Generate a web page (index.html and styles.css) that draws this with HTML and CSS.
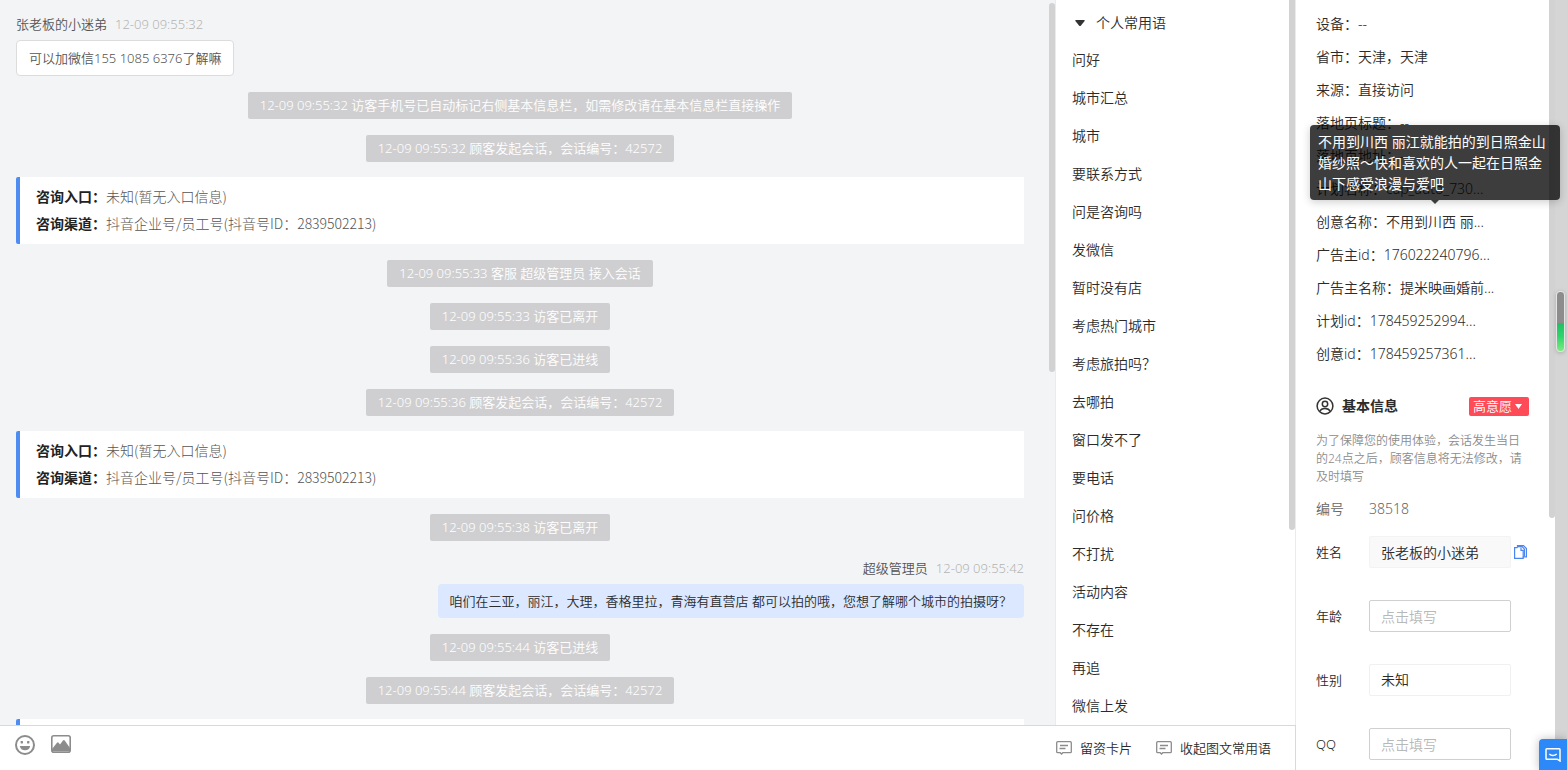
FILE: index.html
```html
<!DOCTYPE html>
<html lang="zh-CN">
<head>
<meta charset="utf-8">
<title>会话</title>
<link rel="stylesheet" href="styles.css">
</head>
<body>
<div class="app">
  <div class="workspace">
    <div class="panels">
      <main class="chat">
        <div class="messages">
          <div class="msg-head"><span class="msg-name">张老板的小迷弟</span><time class="msg-time">12-09 09:55:32</time></div>
          <div class="bubble bubble-in">可以加微信155 1085 6376了解嘛</div>
          <p class="notice">12-09 09:55:32 访客手机号已自动标记右侧基本信息栏，如需修改请在基本信息栏直接操作</p>
          <p class="notice">12-09 09:55:32 顾客发起会话，会话编号：42572</p>
          <div class="entry">
            <div class="entry-row"><b>咨询入口：</b>未知(暂无入口信息)</div>
            <div class="entry-row"><b>咨询渠道：</b>抖音企业号/员工号(抖音号ID：2839502213)</div>
          </div>
          <p class="notice">12-09 09:55:33 客服 超级管理员 接入会话</p>
          <p class="notice">12-09 09:55:33 访客已离开</p>
          <p class="notice">12-09 09:55:36 访客已进线</p>
          <p class="notice">12-09 09:55:36 顾客发起会话，会话编号：42572</p>
          <div class="entry">
            <div class="entry-row"><b>咨询入口：</b>未知(暂无入口信息)</div>
            <div class="entry-row"><b>咨询渠道：</b>抖音企业号/员工号(抖音号ID：2839502213)</div>
          </div>
          <p class="notice">12-09 09:55:38 访客已离开</p>
          <div class="msg-head msg-head-out"><span class="msg-name">超级管理员</span><time class="msg-time">12-09 09:55:42</time></div>
          <div class="bubble bubble-out">咱们在三亚，丽江，大理，香格里拉，青海有直营店 都可以拍的哦，您想了解哪个城市的拍摄呀？</div>
          <p class="notice">12-09 09:55:44 访客已进线</p>
          <p class="notice">12-09 09:55:44 顾客发起会话，会话编号：42572</p>
          <div class="entry entry-cut"></div>
        </div>
        <span class="thumb thumb-chat"></span>
      </main>
      <aside class="phrases">
        <button class="phrase-title" type="button">
          <svg width="10" height="6" viewBox="0 0 10 6"><path d="M1 0h8q1.300 0 .6 1L6 5.500q-1 1-2 0L.4 1Q-.3 0 1 0z" fill="#333"/></svg>个人常用语
        </button>
        <ul class="phrase-list">
          <li>问好</li><li>城市汇总</li><li>城市</li><li>要联系方式</li><li>问是咨询吗</li><li>发微信</li>
          <li>暂时没有店</li><li>考虑热门城市</li><li>考虑旅拍吗？</li><li>去哪拍</li><li>窗口发不了</li><li>要电话</li>
          <li>问价格</li><li>不打扰</li><li>活动内容</li><li>不存在</li><li>再追</li><li>微信上发</li>
        </ul>
        <span class="thumb thumb-phrases"></span>
      </aside>
    </div>
    <footer class="toolbar">
      <button class="tool" type="button" aria-label="表情">
        <svg width="20" height="20" viewBox="0 0 20 20"><circle cx="10" cy="10" r="9" fill="none" stroke="#8c8c8c" stroke-width="2"/><rect x="5.600" y="6" width="2.400" height="2.400" rx=".6" fill="#8c8c8c"/><rect x="12" y="6" width="2.400" height="2.400" rx=".6" fill="#8c8c8c"/><path d="M4.800 11h10.400c-.3 2.800-2.500 4.300-5.200 4.300S5.100 13.800 4.800 11z" fill="#8c8c8c"/></svg>
      </button>
      <button class="tool" type="button" aria-label="图片">
        <svg width="20" height="18" viewBox="0 0 20 18"><rect x=".8" y=".8" width="18.400" height="16.400" rx="2" fill="none" stroke="#8c8c8c" stroke-width="1.600"/><path d="M1 14l5-6.300q.8-1 1.600 0L9 9.500l3-4q.9-1 1.700 0L19 13v3.500H1z" fill="#8c8c8c"/></svg>
      </button>
      <div class="links">
        <button class="link" type="button">
          <svg width="16" height="14" viewBox="0 0 16 14"><path d="M1.700.7h12.600q1 0 1 1v9q0 1-1 1H6.800L5.500 13l-1.300-1.300H1.700q-1 0-1-1v-9q0-1 1-1zM4 4.500h8M3.500 7.500h6" fill="none" stroke="#8c8c8c" stroke-width="1.300"/></svg>留资卡片
        </button>
        <button class="link" type="button">
          <svg width="16" height="14" viewBox="0 0 16 14"><path d="M1.700.7h12.600q1 0 1 1v9q0 1-1 1H6.800L5.500 13l-1.300-1.300H1.700q-1 0-1-1v-9q0-1 1-1zM4 4.500h8M3.500 7.500h6" fill="none" stroke="#8c8c8c" stroke-width="1.300"/></svg>收起图文常用语
        </button>
      </div>
    </footer>
  </div>
  <aside class="visitor">
    <div class="visitor-body">
      <ul class="facts">
        <li>设备：--</li>
        <li>省市：天津，天津</li>
        <li>来源：直接访问</li>
        <li>落地页标题：--</li>
        <li>落地页地址：--</li>
        <li>计划名称：cap_auto_730...</li>
        <li class="has-tip">创意名称：不用到川西 丽...<span class="tip" role="tooltip">不用到川西 丽江就能拍的到日照金山婚纱照～快和喜欢的人一起在日照金山下感受浪漫与爱吧</span></li>
        <li>广告主id：176022240796...</li>
        <li>广告主名称：提米映画婚前...</li>
        <li>计划id：178459252994...</li>
        <li>创意id：178459257361...</li>
      </ul>
      <div class="section-head">
        <svg width="18" height="18" viewBox="0 0 18 18" fill="none" stroke="#333" stroke-width="1.500"><circle cx="9" cy="9" r="7.900"/><circle cx="9" cy="7" r="2.700"/><path d="M3.700 14.500c1-2.300 3-3 5.300-3s4.300.7 5.300 3"/></svg>
        <h2>基本信息</h2>
        <button class="tag" type="button">高意愿<svg width="7" height="5" viewBox="0 0 7 5"><path d="M0 0h7L3.500 5z" fill="#fff"/></svg></button>
      </div>
      <p class="hint">为了保障您的使用体验，会话发生当日的24点之后，顾客信息将无法修改，请及时填写</p>
      <div class="number"><span>编号</span><span>38518</span></div>
      <form class="fields">
        <div class="field"><label for="name">姓名</label><input class="readonly" id="name" type="text" value="张老板的小迷弟" readonly>
          <button class="copy" type="button" aria-label="复制"><svg width="13" height="14" viewBox="0 0 13 14" fill="none" stroke="#4d85f0" stroke-width="1.200"><path d="M3.500 2.600H.6v10.800h8.600v-1.600"/><path d="M3.500 1.600h4.700l2.200 2.600v7.400"/><path d="M3.500 2.600V.6h6l2.900 3v8.200H9.200V5.400H7V2.600"/></svg></button></div>
        <div class="field"><label for="age">年龄</label><input id="age" type="text" placeholder="点击填写"></div>
        <div class="field"><label for="gender">性别</label><select id="gender"><option>未知</option><option>男</option><option>女</option></select></div>
        <div class="field"><label for="qq">QQ</label><input id="qq" type="text" placeholder="点击填写"></div>
      </form>
    </div>
    <span class="thumb thumb-visitor"></span>
    <div class="track"><span class="meter"></span></div>
    <button class="service" type="button" aria-label="客服">
      <svg width="16" height="14" viewBox="0 0 16 14" fill="none" stroke="#fff" stroke-width="1.500"><path d="M1.800.8h12.400q.8 0 .8.800V13l-2.800-1.800H1.800q-.8 0-.8-.8V1.600q0-.8.8-.8z"/><path d="M4.300 6c2 2 5.400 2 7.400 0"/></svg>
    </button>
  </aside>
</div>
</body>
</html>
```
FILE: styles.css
```css
* { box-sizing: border-box; }

body {
  margin: 0;
  color: #2b2b2b;
  font: 350 14px/20px "Noto Sans", "Noto Sans CJK SC", sans-serif;
}

p, ul, h2 { margin: 0; padding: 0; }
ul { list-style: none; }
svg { display: block; flex: none; }

button, input, select {
  margin: 0;
  padding: 0;
  border: 0;
  background: none;
  color: inherit;
  font: inherit;
}

.app { display: flex; height: 100vh; overflow: hidden; }
.workspace { display: flex; flex: 1; flex-direction: column; min-width: 0; }
.panels { display: flex; flex: 1; min-height: 0; }

.thumb {
  position: absolute;
  width: 6px;
  border-radius: 3px;
  background: #d2d2d2;
}

/* Conversation */
.chat { position: relative; flex: 1; min-width: 0; overflow: hidden; background: #f3f4f6; }
.thumb-chat { top: 3px; right: 0; height: 369px; }

.messages {
  display: flex;
  flex-direction: column;
  padding: 13px 31px 0 16px;
  font-size: 13px;
}

.msg-head { display: flex; gap: 8px; line-height: 22px; }
.msg-head-out { justify-content: flex-end; margin-top: 16px; }
.msg-name { color: #555; }
.msg-time { color: #b4b4b4; }

.bubble {
  margin-top: 5px;
  padding: 8px 12px;
  border-radius: 4px;
  line-height: 18px;
}
.bubble-in { align-self: flex-start; border: 1px solid #dcdcdc; background: #fff; color: #555; }
.bubble-out { align-self: flex-end; background: #dce8ff; }

.notice {
  align-self: center;
  margin-top: 16px;
  padding: 0 12px;
  border-radius: 2px;
  background: #cfcfd1;
  color: #fff;
  line-height: 27px;
}

.entry {
  margin-top: 15px;
  padding: 6px 16px 7px;
  border-left: 4px solid #4e8cf2;
  border-radius: 2px 0 0 2px;
  background: #fff;
  color: #555;
  font-family: "Noto Sans CJK SC", sans-serif;
  font-size: 14px;
  font-weight: 300;
  line-height: 27px;
}
.entry b { color: #222; font-weight: 700; }
.entry-cut { height: 67px; }

/* Saved phrases */
.phrases {
  position: relative;
  width: 241px;
  padding: 4px 16px 0;
  overflow: hidden;
  border: solid #ebebeb;
  border-width: 0 1px;
}
.thumb-phrases { top: -3px; right: 0; height: 533px; }
.phrase-title { display: flex; align-items: center; gap: 11px; height: 37px; padding-left: 3px; }
.phrase-list { line-height: 38px; }

/* Toolbar */
.toolbar {
  display: flex;
  align-items: flex-start;
  gap: 16px;
  height: 45px;
  padding: 9px 24px 0 15px;
  border: solid #d9d9d9;
  border-width: 1px 1px 0 0;
}
.links { display: flex; gap: 24px; margin-left: auto; padding-top: 3px; }
.link { display: flex; align-items: center; gap: 8px; font-size: 13px; }
.tool { display: flex; align-items: center; min-width: 20px; }

/* Visitor panel */
.visitor { position: relative; display: flex; width: 271px; }
.visitor-body { flex: 1; min-width: 0; padding: 7px 26px 0 20px; }
.thumb-visitor { top: -3px; right: 12px; height: 521px; }
.track { position: relative; width: 12px; background: #d5d5d5; }
.meter {
  position: absolute;
  top: 291px;
  right: 2px;
  width: 9px;
  height: 61px;
  border: 1px solid #e4e4e4;
  border-radius: 4px;
  background: linear-gradient(#8c8c8c 52%, #20bf63 52%, #2fd36b 75%, #7bea7f);
  box-shadow: 0 1px 4px #aaa;
}

.facts { line-height: 33px; white-space: nowrap; }
.has-tip { position: relative; }
.tip {
  position: absolute;
  bottom: calc(100% + 5px);
  left: -6px;
  z-index: 2;
  width: 250px;
  padding: 6px 8px;
  border-radius: 4px;
  background: rgba(0, 0, 0, .76);
  box-shadow: 0 2px 8px rgba(0, 0, 0, .2);
  color: #fff;
  font-weight: 400;
  line-height: 21px;
  white-space: normal;
}
.tip::after {
  content: "";
  position: absolute;
  top: 100%;
  left: 50%;
  margin-left: -4px;
  border: 4px solid transparent;
  border-top-color: #3c3c3c;
  border-bottom: 0;
}

.section-head { display: flex; align-items: center; gap: 8px; height: 20px; margin-top: 26px; }
.section-head h2 { font-size: 14px; font-weight: 700; line-height: 18px; }
.tag {
  display: flex;
  align-items: center;
  gap: 3px;
  height: 19px;
  margin-left: auto;
  padding: 0 7px 0 4px;
  border-radius: 2px;
  background: #ff4a57;
  color: #fff;
  font-size: 13px;
}
.hint { margin-top: 16px; color: #8c8c8c; font-size: 12px; line-height: 18px; }
.number { display: flex; gap: 25px; margin-top: 13px; color: #666; }

.fields { display: flex; flex-direction: column; gap: 32px; margin-top: 17px; }
.field { display: flex; align-items: center; }
.field label { width: 53px; font-size: 13px; }
.field input, .field select {
  width: 142px;
  height: 32px;
  padding: 0 11px;
  border: 1px solid #d0d0d0;
  border-radius: 2px;
  background: #fff;
}
.field select { border-color: #f0f0f0; appearance: none; }
.field input.readonly { border-color: #f3f3f3; background: #f9f9fa; }
.field input::placeholder { color: #b8b8b8; opacity: 1; }
.copy { margin-left: 3px; }

.service {
  position: absolute;
  right: 0;
  bottom: 0;
  width: 28px;
  height: 31px;
  padding-left: 6px;
  border-radius: 4px 0 0 0;
  background: #2d88f8;
  box-shadow: 0 0 10px rgba(0, 0, 0, .25);
}
```
